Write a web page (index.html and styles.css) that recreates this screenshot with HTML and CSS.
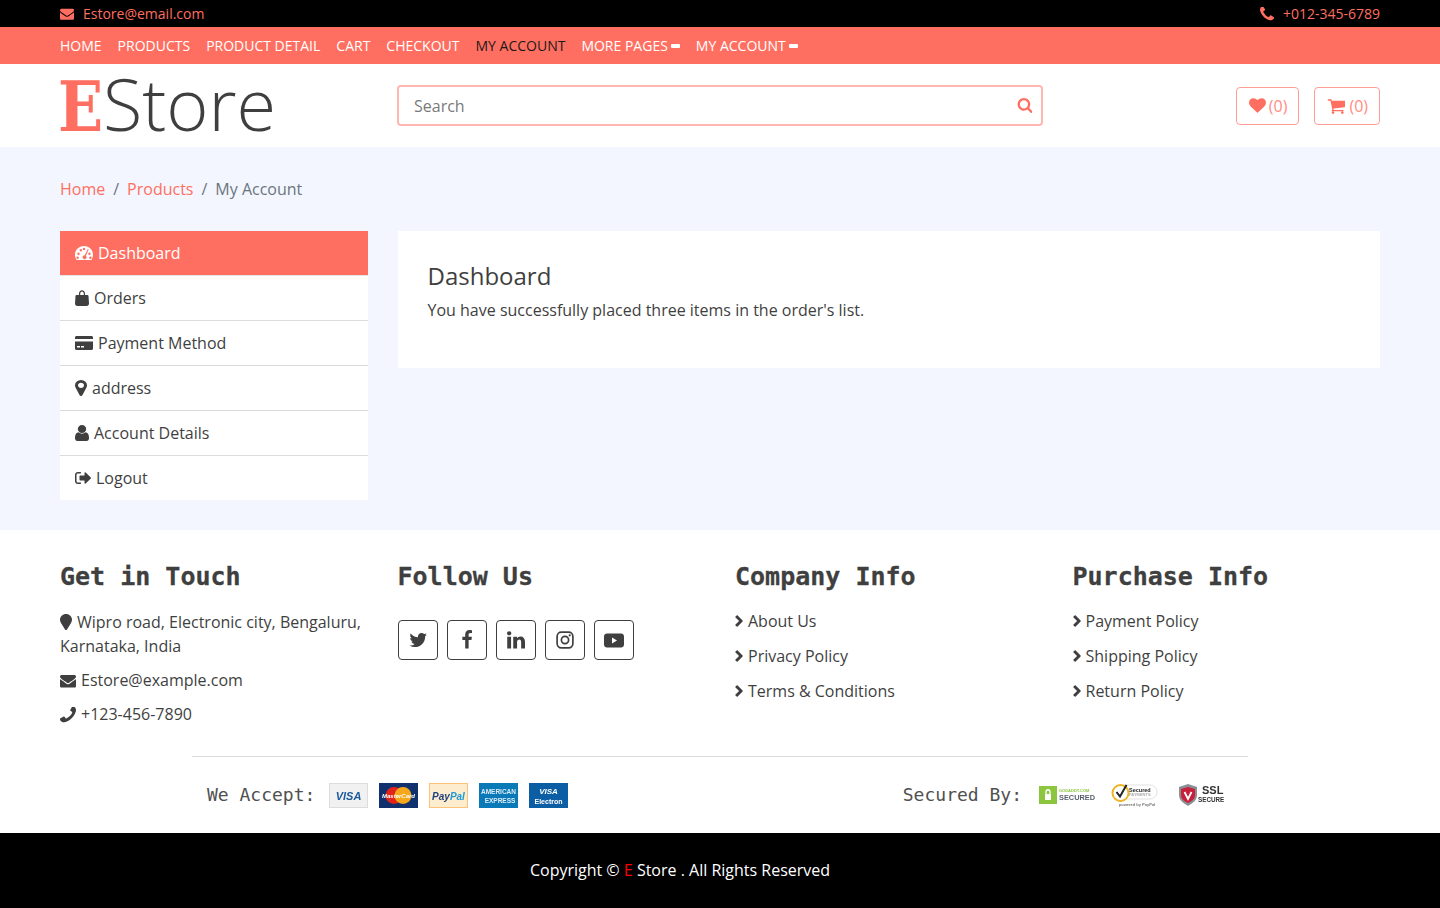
FILE: index.html
```html
<!DOCTYPE html>
<html lang="en">
<head>
<meta charset="utf-8">
<title>EStore - My Account</title>
<link rel="stylesheet" href="styles.css">
</head>
<body>
<svg class="defs" width="0" height="0" aria-hidden="true">
  <symbol id="i-envelope" viewBox="0 192 1792 1472"><path d="M1792 710v794q0 66-47 113t-113 47h-1472q-66 0-113-47t-47-113v-794q44 49 101 87 362 246 497 345 57 42 92.5 65.5t94.5 48 110 24.5h2q51 0 110-24.5t94.5-48 92.5-65.5q170-123 498-345 57-39 100-87zm0-294q0 79-49 151t-122 123q-376 261-468 325-10 7-42.5 30.5t-54 38-52 32.5-57.5 27-50 9h-2q-23 0-50-9t-57.5-27-52-32.5-54-38-42.5-30.5q-91-64-262-182.5t-205-142.5q-62-42-117-115.5t-55-136.5q0-78 41.5-130t118.5-52h1472q65 0 112.5 47t47.5 113z"/></symbol>
  <symbol id="i-phone" viewBox="192 192 1408 1408"><path d="M1600 1240q0 27-10 70.5t-21 68.5q-21 50-122 106-94 51-186 51-27 0-53-3.5t-57.5-12.5-47-14.5-55.5-20.5-49-18q-98-35-175-83-127-79-264-216t-216-264q-48-77-83-175-3-9-18-49t-20.5-55.5-14.5-47-12.5-57.5-3.5-53q0-92 51-186 56-101 106-122 25-11 68.5-21t70.5-10q14 0 21 3 18 6 53 76 11 19 30 54t35 63.5 31 53.5q3 4 17.5 25t21.5 35.5 7 28.5q0 20-28.5 50t-62 55-62 53-28.5 46q0 9 5 22.5t8.5 20.5 14 24 11.5 19q76 137 174 235t235 174q2 1 19 11.5t24 14 20.5 8.5 22.5 5q18 0 46-28.5t53-62 55-62 50-28.5q14 0 28.5 7t35.5 21.5 25 17.5q25 15 53.5 31t63.5 35 54 30q70 35 76 53 3 7 3 21z"/></symbol>
  <symbol id="i-heart" viewBox="0 128 1792 1536"><path d="M896 1664q-26 0-44-18l-624-602q-10-8-27.5-26t-55.5-65.5-68-97.5-53.5-121-23.5-138q0-220 127-344t351-124q62 0 126.5 21.5t120 58 95.500 68.500 76 68q36-36 76-68t95.500-68.500 120-58 126.500-21.500q224 0 351 124t127 344q0 221-229 450l-623 600q-18 18-44 18z"/></symbol>
  <symbol id="i-search" viewBox="0 128 1664 1664"><path d="M1216 832q0-185-131.5-316.5t-316.5-131.5-316.5 131.5-131.5 316.5 131.5 316.5 316.5 131.5 316.5-131.5 131.5-316.5zm512 832q0 52-38 90t-90 38q-54 0-90-38l-343-342q-179 124-399 124-143 0-273.5-55.5t-225-150-150-225-55.5-273.5 55.5-273.5 150-225 225-150 273.5-55.5 273.5 55.5 225 150 150 225 55.5 273.5q0 220-124 399l343 343q37 37 37 90z"/></symbol>
  <symbol id="i-cart" viewBox="0 128 1728 1536"><path d="M704 1536q0 52-38 90t-90 38-90-38-38-90 38-90 90-38 90 38 38 90zm896 0q0 52-38 90t-90 38-90-38-38-90 38-90 90-38 90 38 38 90zm128-1088v512q0 24-16.5 42.5t-40.5 21.5l-1044 122q13 60 13 70 0 16-24 64h920q26 0 45 19t19 45-19 45-45 19h-1024q-26 0-45-19t-19-45q0-11 8-31.5t16-36 21.5-40 15.5-29.5l-177-823h-204q-26 0-45-19t-19-45 19-45 45-19h256q16 0 28.5 6.5t19.5 15.5 13 24.5 8 26 5.5 29.5 4.5 26h1201q26 0 45 19t19 45z"/></symbol>
  <symbol id="i-user" viewBox="256 128 1280 1536" preserveAspectRatio="none"><path d="M1536 1399q0 109-62.5 187t-150.5 78h-854q-88 0-150.5-78t-62.5-187q0-85 8.5-160.5t31.5-152 58.5-131 94-89 134.5-34.5q131 128 313 128t313-128q76 0 134.5 34.5t94 89 58.5 131 31.5 152 8.5 160.5zm-256-887q0 159-112.5 271.5t-271.5 112.5-271.5-112.5-112.5-271.5 112.5-271.5 271.5-112.5 271.5 112.5 112.5 271.5z"/></symbol>
  <symbol id="i-marker" viewBox="384 128 1024 1536" preserveAspectRatio="none"><path d="M1152 640q0-106-75-181t-181-75-181 75-75 181 75 181 181 75 181-75 75-181zm256 0q0 109-33 179l-364 774q-16 33-47.5 52t-67.5 19-67.5-19-46.5-52l-365-774q-33-70-33-179 0-212 150-362t362-150 362 150 150 362z"/></symbol>
  <symbol id="i-pin" viewBox="0 0 12 16"><path d="M6 0C2.7 0 0 2.5 0 5.6 0 7 .5 8 1 9l4 6.4c.4.7 1.5.7 2 0L11 9c.5-1 1-2 1-3.400C12 2.500 9.300 0 6 0z"/></symbol>
  <symbol id="i-bag" viewBox="0 0 14 16"><path d="M4 5V3.800C4 1.700 5.300 .3 7 .3s3 1.400 3 3.500V5h2.400c.6 0 1 .4 1.100 1L14 13.500c0 1.400-1 2.500-2.300 2.500H2.300C1 16 0 14.900 0 13.500L.5 6c.1-.6.5-1 1.100-1H4zm1.200 0h3.600V3.800C8.800 2.500 8 1.500 7 1.500S5.200 2.500 5.200 3.800V5z"/></symbol>
  <symbol id="i-card" viewBox="0 0 18 14"><path d="M1.500 0h15c.8 0 1.500.7 1.500 1.500V3H0V1.500C0 .7.700 0 1.500 0zM0 5.500h18v7c0 .8-.7 1.500-1.500 1.500h-15C.7 14 0 13.300 0 12.500v-7zM2 10v1.500h3V10H2zm4 0v1.500h3V10H6z"/></symbol>
  <symbol id="i-dash" viewBox="0 0 18 14"><path fill-rule="evenodd" d="M9 0c5 0 9 3.900 9 8.800 0 1.800-.5 3.500-1.400 5-.1.100-.3.200-.5.200H1.900c-.2 0-.4-.1-.5-.2C.5 12.300 0 10.600 0 8.800 0 3.900 4 0 9 0zM3.500 6.500a1.200 1.200 0 1 0 0 2.400 1.200 1.200 0 0 0 0-2.400zM5.800 3a1.200 1.200 0 1 0 0 2.400A1.200 1.200 0 0 0 5.800 3zM9 1.700a1.200 1.200 0 1 0 0 2.400 1.200 1.200 0 0 0 0-2.400zM14.500 6.500a1.200 1.200 0 1 0 0 2.400 1.200 1.200 0 0 0 0-2.400zM12.700 3.200l-2.900 6a2 2 0 1 0 1.200.6l2.600-6.200c.2-.6-.6-.9-.9-.4zM2.600 10.500a1.200 1.200 0 1 0 0 2.400 1.200 1.200 0 0 0 0-2.400zM15.400 10.500a1.200 1.200 0 1 0 0 2.400 1.200 1.200 0 0 0 0-2.400z"/></symbol>
  <symbol id="i-logout" viewBox="0 0 16 12"><path d="M6 10.700v.3c0 .4-.1 1-.8 1H3C1.300 12 0 10.700 0 9V3c0-1.700 1.300-3 3-3h2.500c.3 0 .5.200.5.500 0 .3 0 1-.5 1H3C2.200 1.500 1.500 2.200 1.500 3v6c0 .8.700 1.500 1.500 1.500h2.700c.2 0 .3.100.3.200zM16 6c0 .2-.1.400-.2.500L10.700 11.600c-.4.400-1.200.1-1.200-.5V8.500H5.200c-.4 0-.7-.3-.7-.7V4.200c0-.4.300-.7.700-.7h4.300V.9c0-.6.800-.9 1.200-.5l5.100 5.100c.1.100.2.300.2.500z"/></symbol>
  <symbol id="i-chevron" viewBox="0 0 8 12"><path d="M7.600 6.600 2.700 11.500c-.3.300-.7.300-1 0l-1.200-1.100c-.3-.3-.3-.7 0-1L4.100 6 .5 2.500c-.3-.3-.3-.7 0-1L1.700.5c.3-.3.700-.3 1 0l4.900 4.900c.3.300.3.900 0 1.200z"/></symbol>
  <symbol id="i-twitter" viewBox="64 192 1632 1408"><path d="M1684 408q-67 98-162 167 1 14 1 42 0 130-38 259.500t-115.500 248.500-184.500 210.500-258 146-323 54.500q-271 0-496-145 35 4 78 4 225 0 401-138-105-2-188-64.500t-114-159.500q33 5 61 5 43 0 85-11-112-23-185.500-111.500t-73.500-205.500v-4q68 38 146 41-66-44-105-115t-39-154q0-88 44-163 121 149 294.500 238.500t371.500 99.500q-8-38-8-74 0-134 94.500-228.500t228.500-94.500q140 0 236 102 109-21 205-78-37 115-142 178 91-10 186-53z"/></symbol>
  <symbol id="i-facebook" viewBox="0 0 1792 1792"><path d="M1343 12v264h-157q-86 0-116 36t-30 108v189h293l-39 296h-254v759h-306v-759h-255v-296h255v-218q0-186 104-288.500t277-102.500q147 0 228 12z"/></symbol>
  <symbol id="i-linkedin" viewBox="128 128 1536 1536"><path d="M477 625v991h-330v-991h330zm21-306q1 73-50.500 122t-135.500 49h-2q-82 0-132-49t-50-122q0-74 51.500-122.500t134.500-48.500 133 48.500 51 122.500zm1166 729v568h-329v-530q0-105-40.500-164.500t-126.500-59.500q-63 0-105.500 34.500t-63.500 85.500q-11 30-11 81v553h-329q2-399 2-647t-1-296l-1-48h329v144h-2q20-32 41-56t56.500-52 87-43.500 114.500-15.500q171 0 275 113.500t104 332.500z"/></symbol>
  <symbol id="i-instagram" viewBox="0 0 16 16"><rect x="1" y="1" width="14" height="14" rx="3.800" fill="none" stroke="currentColor" stroke-width="1.500"/><circle cx="8" cy="8" r="3.200" fill="none" stroke="currentColor" stroke-width="1.500"/><circle cx="12.200" cy="3.800" r="1"/></symbol>
  <symbol id="i-youtube" viewBox="0 0 20 14"><path fill-rule="evenodd" d="M3 0h14c1.700 0 3 1.300 3 3v8c0 1.700-1.300 3-3 3H3c-1.700 0-3-1.300-3-3V3c0-1.700 1.300-3 3-3zm5 4v6l5-3-5-3z"/></symbol>
</svg>

<div class="topbar">
  <a class="top-link"><svg class="ico ico-14"><use href="#i-envelope"/></svg>Estore@email.com</a>
  <a class="top-link"><svg class="ico ico-14"><use href="#i-phone"/></svg>+012-345-6789</a>
</div>

<nav class="navbar">
  <a class="nav-link">Home</a>
  <a class="nav-link">Products</a>
  <a class="nav-link">Product Detail</a>
  <a class="nav-link">Cart</a>
  <a class="nav-link">Checkout</a>
  <a class="nav-link is-current">My Account</a>
  <a class="nav-link">More Pages<span class="caret"></span></a>
  <a class="nav-link">My Account<span class="caret"></span></a>
</nav>

<header class="header">
  <div class="logo"><span class="logo-e">E</span><span class="logo-store">Store</span></div>
  <div class="search">
    <span class="search-text">Search</span>
    <svg class="ico ico-search"><use href="#i-search"/></svg>
  </div>
  <div class="header-actions">
    <a class="count-btn"><svg class="ico ico-heart"><use href="#i-heart"/></svg>(0)</a>
    <a class="count-btn"><svg class="ico ico-cart"><use href="#i-cart"/></svg>(0)</a>
  </div>
</header>

<main class="page">
  <ol class="breadcrumb">
    <li><a>Home</a></li>
    <li class="sep">/</li>
    <li><a>Products</a></li>
    <li class="sep">/</li>
    <li class="crumb-current">My Account</li>
  </ol>
  <div class="account">
    <ul class="side">
      <li class="side-item is-active"><svg class="side-ico w18"><use href="#i-dash"/></svg>Dashboard</li>
      <li class="side-item"><svg class="side-ico w14"><use href="#i-bag"/></svg>Orders</li>
      <li class="side-item"><svg class="side-ico w18"><use href="#i-card"/></svg>Payment Method</li>
      <li class="side-item"><svg class="side-ico w12"><use href="#i-marker"/></svg>address</li>
      <li class="side-item"><svg class="side-ico w14"><use href="#i-user"/></svg>Account Details</li>
      <li class="side-item"><svg class="side-ico w16"><use href="#i-logout"/></svg>Logout</li>
    </ul>
    <section class="panel">
      <h4 class="panel-title">Dashboard</h4>
      <p class="panel-text">You have successfully placed three items in the order's list.</p>
    </section>
  </div>
</main>

<footer class="footer">
  <div class="footer-cols">
    <div>
      <h2 class="foot-title">Get in Touch</h2>
      <p class="contact"><svg class="ico contact-pin"><use href="#i-pin"/></svg>Wipro road, Electronic city, Bengaluru, Karnataka, India</p>
      <p class="contact"><svg class="ico contact-ico"><use href="#i-envelope"/></svg>Estore@example.com</p>
      <p class="contact"><svg class="ico contact-phone"><use href="#i-phone"/></svg>+123-456-7890</p>
    </div>
    <div>
      <h2 class="foot-title">Follow Us</h2>
      <div class="socials">
        <a class="social"><svg class="ico ico-tw"><use href="#i-twitter"/></svg></a>
        <a class="social"><svg class="ico ico-fb"><use href="#i-facebook"/></svg></a>
        <a class="social"><svg class="ico ico-in"><use href="#i-linkedin"/></svg></a>
        <a class="social"><svg class="ico ico-ig"><use href="#i-instagram"/></svg></a>
        <a class="social"><svg class="ico ico-yt"><use href="#i-youtube"/></svg></a>
      </div>
    </div>
    <div>
      <h2 class="foot-title">Company Info</h2>
      <div class="foot-links">
        <a class="foot-link"><svg class="ico ico-chev"><use href="#i-chevron"/></svg>About Us</a>
        <a class="foot-link"><svg class="ico ico-chev"><use href="#i-chevron"/></svg>Privacy Policy</a>
        <a class="foot-link"><svg class="ico ico-chev"><use href="#i-chevron"/></svg>Terms &amp; Conditions</a>
      </div>
    </div>
    <div>
      <h2 class="foot-title">Purchase Info</h2>
      <div class="foot-links">
        <a class="foot-link"><svg class="ico ico-chev"><use href="#i-chevron"/></svg>Payment Policy</a>
        <a class="foot-link"><svg class="ico ico-chev"><use href="#i-chevron"/></svg>Shipping Policy</a>
        <a class="foot-link"><svg class="ico ico-chev"><use href="#i-chevron"/></svg>Return Policy</a>
      </div>
    </div>
  </div>

  <div class="trust">
    <div class="trust-group">
      <span class="trust-label">We Accept:</span>
      <div class="cards">
        <svg class="pay" viewBox="0 0 39 25"><rect width="39" height="25" fill="#f1f1f1"/><rect x=".5" y=".5" width="38" height="24" fill="none" stroke="#ddd"/><text x="19.500" y="17" class="pay-t visa">VISA</text></svg>
        <svg class="pay" viewBox="0 0 39 25"><rect width="39" height="25" fill="#10306e"/><circle cx="15" cy="12.500" r="8.500" fill="#e2231a"/><circle cx="24" cy="12.500" r="8.500" fill="#f6a81c"/><text x="19.500" y="14.500" class="pay-t mc">MasterCard</text></svg>
        <svg class="pay" viewBox="0 0 39 25"><rect width="39" height="25" fill="#fdeccd"/><rect x=".5" y=".5" width="38" height="24" fill="none" stroke="#fbc27a"/><text x="19.500" y="16.500" class="pay-t pp">Pay<tspan fill="#1b9ad6">Pal</tspan></text></svg>
        <svg class="pay" viewBox="0 0 39 25"><rect width="39" height="25" fill="#0a79b8"/><text x="19.500" y="10.500" class="pay-t amex">AMERICAN</text><text x="21" y="20" class="pay-t amex">EXPRESS</text></svg>
        <svg class="pay" viewBox="0 0 39 25"><rect width="39" height="25" fill="#0b5da4"/><text x="19.500" y="10.500" class="pay-t el1">VISA</text><text x="19.500" y="21" class="pay-t el2">Electron</text></svg>
      </div>
    </div>
    <div class="trust-group">
      <span class="trust-label">Secured By:</span>
      <div class="seals">
        <svg class="seal seal-gd" viewBox="0 0 57 18"><rect y="0" width="18" height="18" fill="#8cc63f"/><rect x="6" y="8" width="6" height="6" fill="#fff"/><path d="M7 8V6c0-3 4-3 4 0v2" fill="none" stroke="#fff" stroke-width="1.300"/><text x="20" y="6" class="seal-t gd1">GODADDY.COM</text><text x="20" y="14" class="seal-t gd2">SECURED</text></svg>
        <svg class="seal seal-pp" viewBox="0 0 47 24"><rect x="6" y="2" width="40" height="14" rx="7" fill="#fff" stroke="#ccc" stroke-width=".6"/><circle cx="9.500" cy="10" r="8" fill="#fff" stroke="#f0b323" stroke-width="2"/><path d="M5.500 9l3.500 4.500L15.500 2" fill="none" stroke="#222" stroke-width="2"/><text x="18" y="8.500" class="seal-t pp1">Secured</text><text x="18" y="13" class="seal-t pp2">PAYMENTS</text><text x="26" y="23" class="seal-t pp3">powered by PayPal</text></svg>
        <svg class="seal seal-ssl" viewBox="0 0 46 22"><path d="M0 3 9 0l9 3v8c0 5-4 8-9 11-5-3-9-6-9-11z" fill="#8a8f95"/><path d="M2 5l7-2 7 2v6c0 4-3 6-7 8-4-2-7-4-7-8z" fill="#c8203a"/><path d="M5.500 8 9 15l3.500-7" fill="none" stroke="#fff" stroke-width="1.800"/><text x="23" y="10" class="seal-t ssl1">SSL</text><text x="19" y="18" class="seal-t ssl2">SECURE</text></svg>
      </div>
    </div>
  </div>
</footer>

<div class="copyright">
  <p class="copy-text">Copyright © <span class="copy-e">E</span> Store . All Rights Reserved</p>
</div>
</body>
</html>
```

FILE: styles.css
```css
* { box-sizing: border-box; }
html, body { margin: 0; padding: 0; }
body {
  font-family: "Open Sans", sans-serif;
  font-size: 16px;
  line-height: 24px;
  color: #3f3f3f;
  background: #fff;
}
a { color: inherit; text-decoration: none; }
ul, ol { list-style: none; margin: 0; padding: 0; }
p, h2, h4 { margin: 0; }
.defs { position: absolute; }
.ico { fill: currentColor; flex: none; }
.ico-14 { width: 14px; height: 14px; margin-right: 9px; }

/* top bar */
.topbar {
  height: 27px;
  padding: 0 60px;
  background: #000;
  color: #ff6f61;
  display: flex;
  justify-content: space-between;
  align-items: center;
  font-size: 14px;
}
.top-link { display: flex; align-items: center; }

/* nav */
.navbar {
  height: 37px;
  padding: 0 60px;
  background: #ff6f61;
  display: flex;
  align-items: center;
  gap: 16px;
  font-size: 14px;
  color: #fff;
  text-transform: uppercase;
}
.nav-link { display: flex; align-items: center; }
.nav-link.is-current { color: #1a1a1a; }
.caret {
  width: 9px;
  height: 4px;
  margin-left: 3px;
  border-radius: 1px;
  background: #fff;
}

/* header */
.header {
  height: 83px;
  padding: 0 60px;
  display: grid;
  grid-template-columns: 307.5px 645px 1fr;
  column-gap: 30px;
  align-items: center;
}
.logo {
  display: flex;
  align-items: baseline;
  height: 83px;
  line-height: 79px;
  margin-left: -2px;
  color: #3f3f3f;
  white-space: nowrap;
}
.logo-e {
  display: block;
  width: 45px;
  font-family: "DejaVu Serif Condensed", "DejaVu Serif", serif;
  font-weight: 700;
  font-size: 70px;
  color: #ff6f61;
  transform: scaleX(.94);
  transform-origin: 2px 0;
}
.logo-store { font-weight: 300; font-size: 72px; }
.search {
  height: 41px;
  margin-left: -.5px;
  padding: 0 9px 0 15px;
  border: 2px solid #ffb7b0;
  border-radius: 4px;
  display: flex;
  align-items: center;
  justify-content: space-between;
  color: #7a7a7a;
}
.ico-search { width: 15px; height: 15px; color: #ff6f61; }
.header-actions { display: flex; justify-content: flex-end; gap: 15px; }
.count-btn {
  height: 38px;
  padding: 0 11px 0 12px;
  border: 1px solid #ff9d94;
  border-radius: 4px;
  display: flex;
  align-items: center;
  gap: 3px;
  color: #ff8d82;
}
.ico-heart { width: 17px; height: 15px; color: #ff6f61; }
.ico-cart { width: 18px; height: 16px; margin-right: 1px; color: #ff6f61; }

/* page */
.page {
  height: 383px;
  padding: 30px 60px 0;
  background: #f3f6ff;
}
.breadcrumb { display: flex; gap: 8px; height: 24px; margin-bottom: 30px; color: #ff6f61; }
.sep, .crumb-current { color: #6c757d; }
.account { display: grid; grid-template-columns: 307.5px 1fr; column-gap: 30px; align-items: start; }
.side { background: #fff; }
.side-item {
  height: 45px;
  padding: 10px 15px;
  display: flex;
  align-items: center;
  border-bottom: 1px solid #dcdcdc;
}
.side-item:last-child { height: 44px; border-bottom: 0; }
.side-item.is-active { background: #ff6f61; color: #fff; border-bottom-color: #e5e5e5; }
.side-ico { fill: currentColor; margin-right: 5px; flex: none; }
.w12 { width: 12px; height: 16px; }
.w14 { width: 14px; height: 16px; }
.w16 { width: 16px; height: 12px; }
.w18 { width: 18px; height: 14px; }
.panel { height: 137px; padding: 30px; background: #fff; }
.panel-title { font-size: 24px; line-height: 30px; font-weight: 400; margin-bottom: 7px; }

/* footer */
.footer { height: 303px; background: #fff; }
.footer-cols {
  height: 226px;
  padding: 32px 60px 0;
  display: grid;
  grid-template-columns: repeat(4, 307.5px);
  column-gap: 30px;
}
.foot-title {
  font-family: "DejaVu Sans Mono", monospace;
  font-weight: 700;
  font-size: 25px;
  line-height: 30px;
  margin-bottom: 18px;
  -webkit-text-stroke: .3px #3f3f3f;
}
.contact { margin-bottom: 10px; }
.contact-pin { width: 12px; height: 16px; margin-right: 5px; vertical-align: -2px; }
.contact-ico { width: 16px; height: 14px; margin-right: 5px; vertical-align: -2px; }
.contact-phone { width: 16px; height: 16px; margin-right: 5px; vertical-align: -3px; transform: scaleX(-1); }
.socials { display: flex; gap: 9px; padding-top: 10px; }
.social {
  width: 40px;
  height: 40px;
  border: 1px solid #3f3f3f;
  border-radius: 4px;
  display: flex;
  align-items: center;
  justify-content: center;
}
.ico-tw { width: 18px; height: 16px; }
.ico-fb { width: 20px; height: 20px; }
.ico-in { width: 18px; height: 18px; }
.ico-ig { width: 18px; height: 18px; }
.ico-yt { width: 20px; height: 15px; }
.foot-links { margin-top: -1px; }
.foot-link { display: flex; align-items: center; height: 24px; margin-bottom: 11px; }
.ico-chev { width: 8px; height: 12px; margin-right: 5px; }

/* trust strip */
.trust {
  height: 77px;
  margin: 0 192px;
  padding: 0 15px;
  border-top: 1px solid #dcdcdc;
  display: flex;
  justify-content: space-between;
  align-items: center;
}
.trust-group { display: flex; align-items: center; }
.trust-label {
  font-family: "DejaVu Sans Mono", monospace;
  font-size: 18px;
  margin-right: 14px;
  color: #505050;
}
.cards { display: flex; gap: 11px; }
.pay { width: 39px; height: 25px; display: block; filter: blur(.3px); }
.pay-t { text-anchor: middle; font-family: "Liberation Sans", sans-serif; font-weight: 700; }
.visa { font-size: 11px; font-style: italic; fill: #1a5a9c; }
.mc { font-size: 6px; fill: #fff; font-style: italic; }
.pp { font-size: 10px; font-style: italic; fill: #1d3f7e; }
.amex { font-size: 6.500px; fill: #dcecf5; }
.el1 { font-size: 8px; font-style: italic; fill: #fff; }
.el2 { font-size: 7px; fill: #fff; }
.seals { display: flex; align-items: center; margin: 0 8px 0 3px; }
.seal { display: block; filter: blur(.25px); }
.seal-gd { width: 57px; height: 18px; }
.seal-pp { width: 47px; height: 24px; margin-left: 15px; }
.seal-ssl { width: 46px; height: 22px; margin-left: 21px; }
.seal-t { font-family: "Liberation Sans", sans-serif; font-weight: 700; }
.gd1 { font-size: 4px; fill: #8cc63f; }
.gd2 { font-size: 7.400px; fill: #5a6270; }
.pp1 { font-size: 5.500px; fill: #222; }
.pp2 { font-size: 4px; fill: #aaa; }
.pp3 { font-size: 4px; fill: #777; text-anchor: middle; }
.ssl1 { font-size: 11px; fill: #333; }
.ssl2 { font-size: 6.300px; fill: #333; }

/* copyright */
.copyright {
  height: 75px;
  padding: 0 80px 2px 0;
  background: #000;
  color: #fff;
  display: flex;
  justify-content: center;
  align-items: center;
}
.copy-e { color: #f00; }
```
